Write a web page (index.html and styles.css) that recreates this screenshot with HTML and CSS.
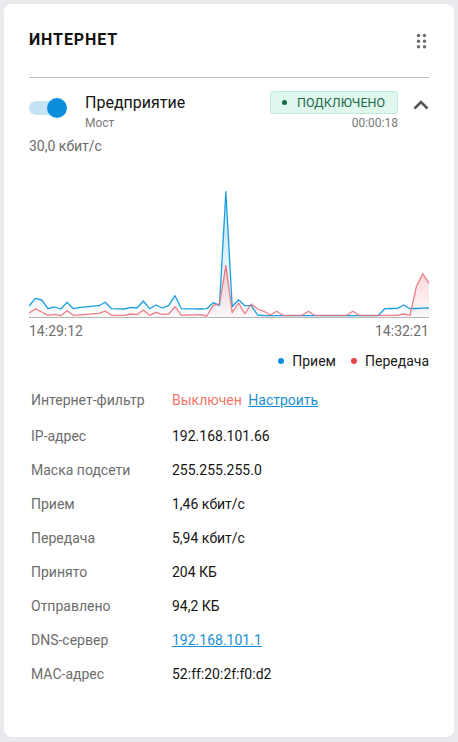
FILE: index.html
```html
<!DOCTYPE html>
<html lang="ru">
<head>
<meta charset="utf-8">
<title>Интернет</title>
<link rel="stylesheet" href="styles.css">
</head>
<body>
<div class="card">
  <div class="head">
    <h2 class="title">ИНТЕРНЕТ</h2>
    <svg class="drag" width="12" height="16" viewBox="0 0 12 16">
      <g fill="#6b6b6b">
        <circle cx="2.5" cy="2.5" r="1.7"/><circle cx="8.5" cy="2.5" r="1.7"/>
        <circle cx="2.5" cy="8.2" r="1.7"/><circle cx="8.5" cy="8.2" r="1.7"/>
        <circle cx="2.5" cy="13.8" r="1.7"/><circle cx="8.5" cy="13.8" r="1.7"/>
      </g>
    </svg>
  </div>
  <div class="divider"></div>

  <div class="conn">
    <div class="toggle"><span class="knob"></span></div>
    <div class="info">
      <div class="info-top">
        <span class="name">Предприятие</span>
        <span class="badge"><span class="bdot"></span>ПОДКЛЮЧЕНО</span>
      </div>
      <div class="info-sub">
        <span>Мост</span>
        <span>00:00:18</span>
      </div>
    </div>
    <svg class="chev" width="16" height="10" viewBox="0 0 16 10">
      <path d="M1.5 8.5 L8 2 L14.5 8.5" fill="none" stroke="#555" stroke-width="2.6"/>
    </svg>
  </div>

  <div class="maxrate">30,0 кбит/с</div>

  <svg class="chart" width="400" height="163" viewBox="0 0 400 163">
    <defs>
      <linearGradient id="gb" x1="0" y1="0" x2="0" y2="1">
        <stop offset="0" stop-color="#1a9ee0" stop-opacity="0.28"/>
        <stop offset="1" stop-color="#1a9ee0" stop-opacity="0.02"/>
      </linearGradient>
      <linearGradient id="gr" x1="0" y1="0" x2="0" y2="1">
        <stop offset="0" stop-color="#e8505a" stop-opacity="0.25"/>
        <stop offset="1" stop-color="#e8505a" stop-opacity="0.03"/>
      </linearGradient>
    </defs>
    <path fill="url(#gb)" d="M0 151 L6.35 143.3 L12.7 145 L19.05 153.7 L25.4 152 L31.75 154 L38.1 147.3 L44.45 153.7 L50.8 152.3 L57.15 151.8 L63.5 151.2 L69.85 150.7 L76.2 147.3 L82.55 153.7 L88.9 153.8 L95.25 154 L101.6 152.3 L107.95 153 L114.3 146 L120.65 153.7 L127 150 L133.35 153 L139.7 150.7 L146.05 140.7 L152.4 153.7 L158.75 153.8 L165.1 153.9 L171.45 154 L177.8 153.7 L184.15 147.7 L190.5 150.3 L196.85 36.7 L203.2 151.7 L209.55 144.7 L215.9 150.7 L222.25 150.7 L228.6 160 L234.95 160.7 L349.25 160.7 L355.6 153.7 L361.95 153.5 L368.3 153.3 L374.65 150 L381 153.7 L387.35 153.5 L393.7 153.2 L400 153 L400 162 L0 162 Z"/>
    <path fill="url(#gr)" d="M0 158.3 L6.35 153.7 L12.7 157 L19.05 160.3 L25.4 159.3 L31.75 160.7 L38.1 155.7 L44.45 160.3 L50.8 159.8 L57.15 159.3 L63.5 158.8 L69.85 158.3 L76.2 156 L82.55 160.3 L88.9 160.3 L95.25 160.3 L101.6 159 L107.95 159.7 L114.3 155 L120.65 160.3 L127 157.3 L133.35 159.3 L139.7 159 L146.05 151.7 L152.4 160.3 L158.75 160 L165.1 159.8 L171.45 159.7 L177.8 161 L184.15 150.3 L190.5 149 L196.85 110.7 L203.2 157.7 L209.55 148 L215.9 158.7 L222.25 149 L228.6 154 L234.95 156.3 L241.3 160 L247.65 156.3 L254 160.3 L273.05 160.3 L279.4 156.3 L285.75 160.3 L317.5 160.3 L323.85 156.3 L330.2 160.3 L368.3 160.3 L374.65 159 L381 160.3 L387.35 131.7 L393.7 118.7 L400 128.3 L400 162 L0 162 Z"/>
    <path fill="none" stroke="#1a9ee0" stroke-width="1.3" stroke-linejoin="round" d="M0 151 L6.35 143.3 L12.7 145 L19.05 153.7 L25.4 152 L31.75 154 L38.1 147.3 L44.45 153.7 L50.8 152.3 L57.15 151.8 L63.5 151.2 L69.85 150.7 L76.2 147.3 L82.55 153.7 L88.9 153.8 L95.25 154 L101.6 152.3 L107.95 153 L114.3 146 L120.65 153.7 L127 150 L133.35 153 L139.7 150.7 L146.05 140.7 L152.4 153.7 L158.75 153.8 L165.1 153.9 L171.45 154 L177.8 153.7 L184.15 147.7 L190.5 150.3 L196.85 36.7 L203.2 151.7 L209.55 144.7 L215.9 150.7 L222.25 150.7 L228.6 160 L234.95 160.7 L349.25 160.7 L355.6 153.7 L361.95 153.5 L368.3 153.3 L374.65 150 L381 153.7 L387.35 153.5 L393.7 153.2 L400 153"/>
    <path fill="none" stroke="#ec6a72" stroke-opacity="0.85" stroke-width="1.3" stroke-linejoin="round" d="M0 158.3 L6.35 153.7 L12.7 157 L19.05 160.3 L25.4 159.3 L31.75 160.7 L38.1 155.7 L44.45 160.3 L50.8 159.8 L57.15 159.3 L63.5 158.8 L69.85 158.3 L76.2 156 L82.55 160.3 L88.9 160.3 L95.25 160.3 L101.6 159 L107.95 159.7 L114.3 155 L120.65 160.3 L127 157.3 L133.35 159.3 L139.7 159 L146.05 151.7 L152.4 160.3 L158.75 160 L165.1 159.8 L171.45 159.7 L177.8 161 L184.15 150.3 L190.5 149 L196.85 110.7 L203.2 157.7 L209.55 148 L215.9 158.7 L222.25 149 L228.6 154 L234.95 156.3 L241.3 160 L247.65 156.3 L254 160.3 L273.05 160.3 L279.4 156.3 L285.75 160.3 L317.5 160.3 L323.85 156.3 L330.2 160.3 L368.3 160.3 L374.65 159 L381 160.3 L387.35 131.7 L393.7 118.7 L400 128.3"/>
    <line x1="0" y1="162.5" x2="400" y2="162.5" stroke="#b5b5b5" stroke-width="1"/>
  </svg>

  <div class="times">
    <span>14:29:12</span>
    <span>14:32:21</span>
  </div>

  <div class="legend">
    <span class="li"><span class="ldot blue"></span>Прием</span>
    <span class="li"><span class="ldot red"></span>Передача</span>
  </div>

  <div class="details">
    <div class="row first"><span class="lbl">Интернет-фильтр</span><span class="val"><span class="off">Выключен</span> <a class="link" href="#">Настроить</a></span></div>
    <div class="row"><span class="lbl">IP-адрес</span><span class="val">192.168.101.66</span></div>
    <div class="row"><span class="lbl">Маска подсети</span><span class="val">255.255.255.0</span></div>
    <div class="row"><span class="lbl">Прием</span><span class="val">1,46 кбит/с</span></div>
    <div class="row"><span class="lbl">Передача</span><span class="val">5,94 кбит/с</span></div>
    <div class="row"><span class="lbl">Принято</span><span class="val">204 КБ</span></div>
    <div class="row"><span class="lbl">Отправлено</span><span class="val">94,2 КБ</span></div>
    <div class="row"><span class="lbl">DNS-сервер</span><span class="val"><a class="link" href="#">192.168.101.1</a></span></div>
    <div class="row"><span class="lbl">MAC-адрес</span><span class="val">52:ff:20:2f:f0:d2</span></div>
  </div>
</div>
</body>
</html>
```

FILE: styles.css
```css
* { box-sizing: border-box; }
html, body { margin: 0; padding: 0; }
body {
  background: #e9eaed;
  font-family: Roboto, "Liberation Sans", Arial, sans-serif;
  color: #1a1a1a;
  padding: 4px;
}
.card {
  background: #fff;
  border-radius: 8px;
  width: 450px;
  height: 733px;
  padding: 24px 25px 0 25px;
}
.head {
  display: flex;
  align-items: center;
  justify-content: space-between;
  height: 24px;
  margin-bottom: 25px;
}
.title {
  margin: 0;
  font-size: 16px;
  font-weight: 700;
  letter-spacing: 0.9px;
  color: #111;
  line-height: 24px;
}
.drag { margin-right: 1px; margin-top: 1px; }
.divider { height: 1px; background: #bdbdbd; }

.conn {
  display: flex;
  align-items: flex-start;
  margin-top: 12px;
}
.toggle {
  position: relative;
  width: 34px;
  height: 14px;
  border-radius: 7px;
  background: #c5e3f4;
  margin-top: 11px;
  margin-right: 22px;
  flex: none;
}
.knob {
  position: absolute;
  right: -4px;
  top: -3px;
  width: 20px;
  height: 20px;
  border-radius: 50%;
  background: #0b8fdc;
}
.info { flex: 1; }
.info-top {
  display: flex;
  justify-content: space-between;
  align-items: center;
  height: 24px;
}
.name { font-size: 16px; color: #141414; }
.badge {
  display: flex;
  align-items: center;
  height: 23px;
  padding: 0 12px 0 11px;
  background: #e0f7ee;
  border: 1px solid #bcecd7;
  border-radius: 3px;
  font-size: 12.5px;
  color: #1c6a4a;
}
.bdot {
  width: 5px;
  height: 5px;
  border-radius: 50%;
  background: #0d6a42;
  margin-right: 10px;
}
.info-sub {
  display: flex;
  justify-content: space-between;
  font-size: 12px;
  line-height: 16px;
  color: #7a7a7a;
  margin-top: 1px;
}
.chev { flex: none; margin-left: 15px; margin-top: 10px; }

.maxrate {
  font-size: 14px;
  line-height: 16px;
  color: #6a6a6a;
  margin-top: 7px;
}
.chart { display: block; margin-top: 1px; }
.times {
  display: flex;
  justify-content: space-between;
  font-size: 14px;
  line-height: 16px;
  color: #6f6f6f;
  margin-top: 5px;
}
.legend {
  display: flex;
  justify-content: flex-end;
  gap: 15px;
  font-size: 14px;
  line-height: 18px;
  color: #1a1a1a;
  margin-top: 13px;
}
.li { display: flex; align-items: center; }
.ldot {
  width: 6px;
  height: 6px;
  border-radius: 50%;
  margin-right: 8px;
}
.ldot.blue { background: #0b8fdc; }
.ldot.red { background: #e8434d; }

.details { margin-top: 11px; padding-left: 2px; }
.row {
  display: flex;
  align-items: center;
  height: 34px;
  font-size: 14px;
}
.row.first { height: 38px; }
.lbl { width: 141px; color: #6d6d6d; flex: none; }
.val { color: #161616; }
.off { color: #f2766b; margin-right: 3px; }
.link { color: #1b8fd5; text-decoration: underline; }
```
